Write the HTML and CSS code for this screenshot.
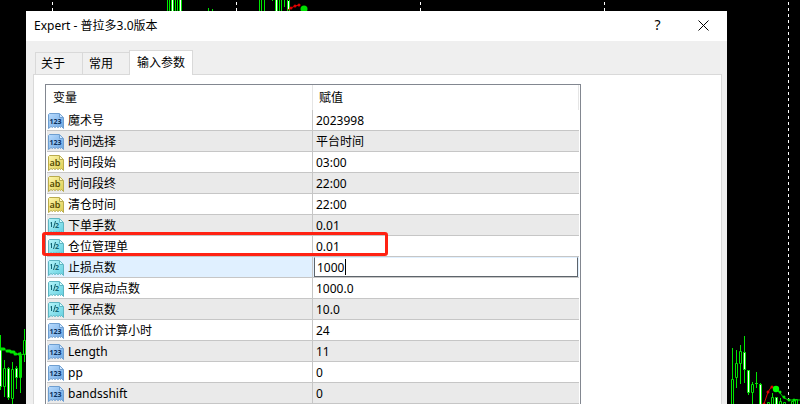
FILE: index.html
```html
<!DOCTYPE html>
<html lang="zh-CN">
<head>
  <meta charset="UTF-8">
  <title>Expert - 普拉多3.0版本</title>
  <link rel="stylesheet" href="styles.css">
</head>
<body>
  <!-- 背景K线图 -->
  <svg class="chart" width="800" height="404" viewBox="0 0 800 404" aria-hidden="true">
    <path class="grid" d="M52.5 2V404M236.5 2V404M420.5 2V404M604.5 2V404M788.5 2V404"/>
    <g class="candles">
      <path d="M167.5 0V11M169.5 0V11M171.5 0V11M173.5 0V11M175.5 0V11M177.5 0V11M179.5 0V11M181.5 0V11M208.5 8V11M212.5 9V11M259.5 0V11M261.5 0V11M264.5 0V11M272.5 0V1M275.5 0V11M277.5 0V11M279.5 0V11M281.5 0V11M284.5 0V7M287.5 0V11M289.5 0V11"/>
      <path class="white" d="M172.5 0V11M180.5 0V11M276.5 0V11M288.5 1V9"/>
      <path d="M0.5 335V390M4.5 360V368M4.5 387V397M8.5 367V400M12.5 362V369M12.5 398V404M16.5 366V389M20.5 352V393M24.5 329V340M24.5 354V362"/>
      <path d="M3.5 368.5h2v18h-2zM11.5 369.5h2v29h-2zM19.5 355.5h2v22h-2zM23.5 340.5h2v14h-2z"/>
      <path class="solid" d="M-1.5 348.5h3v38h-3zM7.5 368.5h2v29h-2zM15.5 368.5h2v9h-2z"/>
      <path d="M732.5 348V379M736.5 350V363M736.5 378V388M740.5 345V351M740.5 363V384M744.5 336V383M748.5 370V395M752.5 382V384M752.5 393V404M756.5 372V388M755 383.5H758M760.5 383V404M772.5 393V397M780.5 398V401"/>
      <path d="M731.5 379.5h2v30h-2zM735.5 363.5h2v14h-2zM739.5 351.5h2v12h-2zM751.5 384.5h2v8h-2zM767.5 402.5h2v8h-2zM771.5 397.5h2v8h-2zM779.5 401.5h2v8h-2zM783.5 402.5h2v8h-2zM791.5 401.5h2v8h-2zM795.5 399.5h2v8h-2z"/>
      <path class="solid" d="M743.5 352.5h2v17h-2zM747.5 370.5h2v22h-2zM759.5 384.5h2v30h-2zM775.5 397.5h2v20h-2z"/>
    </g>
    <path class="up" d="M0 348L3 349L8 351L12 352L16 354L20 355L26 354M776 389L780 393L784 398L789 400L800 400"/>
    <path class="up-dots" d="M1 349h3M7 351h3M11 352h3M15 354h1M19 354h1M780 392h0M784 397h0M789 400h0M794 400h0"/>
    <path class="down" d="M288 10L291 8L295 6L299 5M764 404L768 392L772 386"/>
    <path class="down-dots" d="M291 8h0M295 6h0M299 5h0M764 404h0M768 392h0M772 387h0"/>
    <circle cx="304" cy="9" r="3.5" fill="#00e000"/>
    <circle cx="776" cy="389" r="3.2" fill="#00ff00"/>
  </svg>

  <!-- 参数类型图标 -->
  <svg class="defs" width="0" height="0" aria-hidden="true">
    <defs>
      <linearGradient id="blue" x2="1" y2="1"><stop stop-color="#b9dcff"/><stop offset="1" stop-color="#6ba4df"/></linearGradient>
      <linearGradient id="yellow" x2="1" y2="1"><stop stop-color="#fff8ae"/><stop offset="1" stop-color="#dccb50"/></linearGradient>
      <linearGradient id="cyan" x2="1" y2="1"><stop stop-color="#b5f5fa"/><stop offset="1" stop-color="#63cfe0"/></linearGradient>
      <path id="paper" d="M.5 1.5L1.5.5H11.5L15.5 4.5V15.5L13.5 13.5L12.5 14.5L11.5 13.5L10 14.5L8.5 13.5L7 14.5L5.5 13.5L4.5 14.5L3 13.5L.5 15.5Z"/>
      <symbol id="icon-int" viewBox="0 0 16 16">
        <use href="#paper" fill="url(#blue)" stroke="#6e9ed0"/>
        <path d="M11.5 1V4.5H15" fill="#d5eaff" stroke="#6e9ed0"/>
        <text x="7.5" y="11" fill="#0a2f5c">123</text>
      </symbol>
      <symbol id="icon-str" viewBox="0 0 16 16">
        <use href="#paper" fill="url(#yellow)" stroke="#b9ab4e"/>
        <path d="M11.5 1V4.5H15" fill="#fffbd0" stroke="#b9ab4e"/>
        <text class="letters" x="7" y="11" fill="#544a00">ab</text>
      </symbol>
      <symbol id="icon-dbl" viewBox="0 0 16 16">
        <use href="#paper" fill="url(#cyan)" stroke="#5eb5c2"/>
        <path d="M11.5 1V4.5H15" fill="#d8fbff" stroke="#5eb5c2"/>
        <path d="M3.5 4V9M2.5 5H3.5M7.5 3L5.5 10" fill="none" stroke="#126575"/>
        <text x="9" y="10" fill="#126575">2</text>
      </symbol>
    </defs>
  </svg>

  <div class="dialog" role="dialog" aria-labelledby="title">
    <div class="titlebar">
      <span id="title">Expert - 普拉多3.0版本</span>
      <div class="window-buttons">
        <button type="button" class="help" aria-label="帮助">?</button>
        <button type="button" aria-label="关闭">
          <svg width="11" height="11" viewBox="0 0 11 11"><path d="M.5.5L10.5 10.5M10.5.5L.5 10.5" fill="none" stroke="#000"/></svg>
        </button>
      </div>
    </div>

    <div class="tabs" role="tablist">
      <button type="button" role="tab" class="tab">关于</button>
      <button type="button" role="tab" class="tab">常用</button>
      <button type="button" role="tab" class="tab active" aria-selected="true">输入参数</button>
    </div>

    <div class="panel">
      <div class="list">
        <table>
          <thead>
            <tr><th>变量</th><th>赋值</th></tr>
          </thead>
          <tbody>
            <tr><td><svg class="icon"><use href="#icon-int"/></svg>魔术号</td><td>2023998</td></tr>
            <tr><td><svg class="icon"><use href="#icon-int"/></svg>时间选择</td><td>平台时间</td></tr>
            <tr><td><svg class="icon"><use href="#icon-str"/></svg>时间段始</td><td>03:00</td></tr>
            <tr><td><svg class="icon"><use href="#icon-str"/></svg>时间段终</td><td>22:00</td></tr>
            <tr><td><svg class="icon"><use href="#icon-str"/></svg>清仓时间</td><td>22:00</td></tr>
            <tr><td><svg class="icon"><use href="#icon-dbl"/></svg>下单手数</td><td>0.01</td></tr>
            <tr class="marked"><td><svg class="icon"><use href="#icon-dbl"/></svg>仓位管理单<span class="mark"></span></td><td>0.01</td></tr>
            <tr class="selected"><td><svg class="icon"><use href="#icon-dbl"/></svg><label for="stopLoss">止损点数</label></td><td class="edit"><div class="editor"><input type="text" id="stopLoss" value="1000" size="4"><span class="caret"></span></div></td></tr>
            <tr><td><svg class="icon"><use href="#icon-dbl"/></svg>平保启动点数</td><td>1000.0</td></tr>
            <tr><td><svg class="icon"><use href="#icon-dbl"/></svg>平保点数</td><td>10.0</td></tr>
            <tr><td><svg class="icon"><use href="#icon-int"/></svg>高低价计算小时</td><td>24</td></tr>
            <tr><td><svg class="icon"><use href="#icon-int"/></svg>Length</td><td>11</td></tr>
            <tr><td><svg class="icon"><use href="#icon-int"/></svg>pp</td><td>0</td></tr>
            <tr><td><svg class="icon"><use href="#icon-int"/></svg>bandsshift</td><td>0</td></tr>
          </tbody>
        </table>
      </div>
    </div>
  </div>
</body>
</html>
```
FILE: styles.css
```css
* {
  box-sizing: border-box;
}

body {
  margin: 0;
  min-height: 100vh;
  overflow: hidden;
  background-color: #000;
  color: #000;
  font-family: "Noto Sans", "Noto Sans CJK SC", sans-serif;
  font-size: 12px;
  line-height: 20px;
}

button,
input {
  font: inherit;
  color: inherit;
}

/* 背景图表 */
.chart {
  position: absolute;
  left: 0;
  top: 0;
}

.chart path {
  fill: none;
}

.chart .grid {
  stroke: #fff;
  stroke-dasharray: 3 3;
}

.candles path {
  stroke: #00e600;
}

.candles .white {
  stroke: #fff;
}

.chart .solid {
  fill: #fff;
}

.chart .up {
  stroke: #00d000;
}

.chart .up-dots {
  stroke: #00e600;
  stroke-width: 3;
  stroke-linecap: round;
}

.chart .down {
  stroke: #e00000;
}

.chart .down-dots {
  stroke: #e00000;
  stroke-width: 3;
  stroke-linecap: round;
}

.defs {
  position: absolute;
}

/* 对话框 */
.dialog {
  position: relative;
  margin: 11px 73px 0 26px;
  background-color: #efefef;
}

.titlebar {
  display: flex;
  justify-content: space-between;
  align-items: center;
  height: 30px;
  padding-left: 8px;
  background-color: #fff;
}

.window-buttons {
  display: flex;
}

.window-buttons button {
  display: flex;
  align-items: center;
  justify-content: center;
  width: 46px;
  height: 30px;
  padding: 0 1px 2px 0;
  border: none;
  background: none;
}

.window-buttons .help {
  font-size: 14px;
}

/* 标签页 */
.tabs {
  display: flex;
  align-items: flex-end;
  height: 34px;
  padding-left: 9px;
}

.tab {
  height: 23px;
  padding: 0 17px 0 5px;
  border: 1px solid #d9d9d9;
  border-right: none;
  background-color: #f0f0f0;
}

.tab + .tab {
  padding: 0 16px 0 6px;
}

.tab.active {
  position: relative;
  z-index: 1;
  height: 25px;
  padding: 0 7px;
  border: 1px solid #d9d9d9;
  border-bottom: none;
  background-color: #fff;
}

.panel {
  margin: -1px 5px 0 7px;
  padding: 9px 140px 0 11px;
  border: 1px solid #d9d9d9;
  border-bottom: none;
  background-color: #fff;
}

/* 参数列表 */
.list {
  padding: 0 1px;
  border: 1px solid #828790;
  border-bottom: none;
}

table {
  width: 100%;
  table-layout: fixed;
  border-collapse: separate;
  border-spacing: 0;
}

th {
  height: 25px;
  padding: 0 6px;
  border-right: 1px solid #e5e5e5;
  font-weight: normal;
  text-align: left;
}

td {
  height: 21px;
  padding: 1px 3px 0;
  border-bottom: 1px solid #c6c6c6;
  line-height: 19px;
  white-space: nowrap;
}

td:first-child {
  padding: 1px 1px 0;
  border-right: 1px solid #c6c6c6;
}

tbody tr:nth-child(even) {
  background-color: #eaeaea;
}

tbody tr.selected {
  background-color: #e0f0ff;
}

.icon {
  width: 16px;
  height: 16px;
  margin: -1px 4px 1px 0;
  vertical-align: middle;
}

.defs text {
  font-family: "Noto Sans", sans-serif;
  font-size: 7px;
  font-weight: bold;
  text-anchor: middle;
}

.defs .letters {
  font-size: 9px;
  font-weight: 600;
}

/* 正在编辑的单元格 */
td.edit {
  padding: 0 1px;
}

.editor {
  display: flex;
  align-items: center;
  height: 20px;
  padding-left: 2px;
  border: 1px solid #5d646b;
  border-top-color: #e0f0ff;
  background-color: #fff;
}

.editor input {
  width: 28px;
  height: 18px;
  padding: 0;
  border: none;
  outline: none;
  background: none;
}

.caret {
  width: 1px;
  height: 16px;
  background-color: #000;
}

/* 红色标注框 */
.marked {
  position: relative;
}

.mark {
  position: absolute;
  left: -5px;
  top: -4px;
  width: 65%;
  height: 24px;
  border: 3px solid #ff2213;
  border-radius: 3px;
}
```
